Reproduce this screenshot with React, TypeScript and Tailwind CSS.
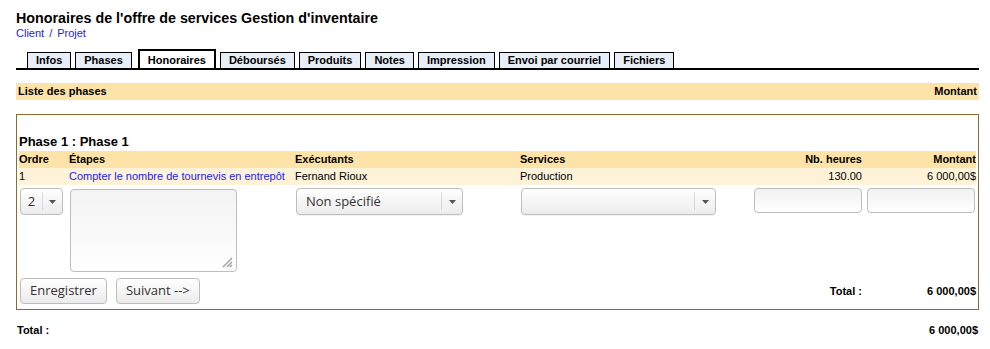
import React from "react";

const tabs = [
  "Infos",
  "Phases",
  "Honoraires",
  "Déboursés",
  "Produits",
  "Notes",
  "Impression",
  "Envoi par courriel",
  "Fichiers",
];

function Arrow() {
  return (
    <svg width="7" height="4" viewBox="0 0 7 4" className="fill-[#555]">
      <path d="M0 0h7L3.5 4z" />
    </svg>
  );
}

function Select({value, width}: {value: string; width: string}) {
  return (
    <div
      className={`${width} h-[27px] flex items-center rounded-[4px] border border-[#bdbdbd] bg-gradient-to-b from-white to-[#ececec] shadow-[0_1px_0_rgba(0,0,0,0.05)]`}
    >
      <span className="flex-1 pl-[9px] text-[13px] text-[#333] truncate">{value}</span>
      <span className="h-[17px] w-px bg-[#d8d8d8]" />
      <span className="w-[20px] flex justify-center">
        <Arrow/>
      </span>
    </div>
  );
}

function Button({label}: {label: string}) {
  return (
    <button
      className="h-[26px] px-[9px] rounded-[4px] border border-[#bdbdbd] bg-gradient-to-b from-white to-[#ebebeb] text-[13px] text-[#333]"
    >
      {label}
    </button>
  );
}

export default function App() {
  return (
    <div className="pl-4 pr-[11px] pt-[10px] font-['Liberation_Sans',Arial,sans-serif] text-black bg-white min-h-[349px]">
      <h1 className="text-[14.3px] leading-[17px] font-bold">
        Honoraires de l'offre de services Gestion d'inventaire
      </h1>
      <div className="text-[11px] leading-[12px] text-[#2222ee]">
        <a href="#">Client</a>
        <span className="px-[5px]">/</span>
        <a href="#">Projet</a>
      </div>

      <ul className="mt-[10px] flex items-end gap-[4px] pl-[11px] border-b-2 border-black">
        {tabs.map((t) =>
          t === "Honoraires" ? (
            <li
              key={t}
              className="h-[16px] ml-[2px] px-[8px] border-2 border-b-0 border-black bg-white text-[11px] font-bold leading-[17px] pt-[1px] box-content"
            >
              {t}
            </li>
          ) : (
            <li
              key={t}
              className="h-[16px] px-[8px] border border-b-0 border-black bg-[#e8eef8] text-[11px] font-bold leading-[15px]"
            >
              {t}
            </li>
          )
        )}
      </ul>

      <div className="mt-[13px] h-[17px] flex items-center justify-between bg-[#fde3a8] px-[2px] text-[11px] font-bold">
        <span>Liste des phases</span>
        <span>Montant</span>
      </div>

      <div className="mt-[14px] border border-[#8d6b2d] px-[2px] pt-[19px] pb-[5px]">
        <h2 className="text-[13px] leading-[15px] font-bold">Phase 1 : Phase 1</h2>
        <div className="mt-[2px] grid grid-cols-[50px_226px_225px_230px_114px_112px] text-[11px]">
          <div className="contents font-bold">
            <div className="h-[17px] flex items-center bg-[#fde3a8]">Ordre</div>
            <div className="h-[17px] flex items-center bg-[#fde3a8]">Étapes</div>
            <div className="h-[17px] flex items-center bg-[#fde3a8]">Exécutants</div>
            <div className="h-[17px] flex items-center bg-[#fde3a8]">Services</div>
            <div className="h-[17px] flex items-center justify-end pr-[2px] bg-[#fde3a8]">Nb. heures</div>
            <div className="h-[17px] flex items-center justify-end bg-[#fde3a8]">Montant</div>
          </div>
          <div className="contents">
            <div className="h-[17px] flex items-center bg-[#fef2d8]">1</div>
            <div className="h-[17px] flex items-center bg-[#fef2d8] text-[#2222ee]">
              Compter le nombre de tournevis en entrepôt
            </div>
            <div className="h-[17px] flex items-center bg-[#fef2d8]">Fernand Rioux</div>
            <div className="h-[17px] flex items-center bg-[#fef2d8]">Production</div>
            <div className="h-[17px] flex items-center justify-end pr-[2px] bg-[#fef2d8]">130.00</div>
            <div className="h-[17px] flex items-center justify-end bg-[#fef2d8]">6 000,00$</div>
          </div>

          <div className="contents font-['Open_Sans',sans-serif]">
            <div className="pt-[3px] pl-[1px]">
              <div className="w-[43px] h-[27px] flex items-center rounded-[4px] border border-[#bdbdbd] bg-gradient-to-b from-white to-[#ececec]">
                <span className="w-[21px] text-center text-[13px] text-[#333]">2</span>
                <span className="h-[17px] w-px bg-[#d8d8d8]" />
                <span className="flex-1 flex justify-center">
                  <Arrow/>
                </span>
              </div>
            </div>
            <div className="pt-[4px] pl-[1px]">
              <div className="relative w-[167px] h-[83px] rounded-[4px] border border-[#bdbdbd] bg-gradient-to-b from-[#f3f3f3] to-white">
                <svg
                  width="12"
                  height="12"
                  viewBox="0 0 12 12"
                  className="absolute right-[3px] bottom-[3px] stroke-[#999]"
                >
                  <path d="M11 2L2 11M11 6L6 11M11 9L9 11" strokeWidth="1.2"/>
                </svg>
              </div>
            </div>
            <div className="pt-[3px] pl-[1px]">
              <Select value="Non spécifié" width="w-[167px]"/>
            </div>
            <div className="pt-[3px] pl-[1px]">
              <Select value="" width="w-[195px]"/>
            </div>
            <div className="pt-[3px] pl-[4px]">
              <div className="w-[108px] h-[25px] rounded-[4px] border border-[#bdbdbd] bg-gradient-to-b from-[#f1f1f1] to-white"/>
            </div>
            <div className="pt-[3px] pl-[3px]">
              <div className="w-[108px] h-[25px] rounded-[4px] border border-[#bdbdbd] bg-gradient-to-b from-[#f1f1f1] to-white"/>
            </div>
          </div>
        </div>

        <div className="mt-[6px] grid grid-cols-[731px_114px_112px] items-center text-[11px]">
          <div className="flex gap-[9px] pl-[1px] font-['Open_Sans',sans-serif]">
            <Button label="Enregistrer"/>
            <Button label="Suivant -->"/>
          </div>
          <div className="text-right pr-[2px] font-bold">Total :</div>
          <div className="text-right font-bold">6 000,00$</div>
        </div>
      </div>

      <div className="mt-[12px] flex justify-between px-[1px] text-[11px] font-bold">
        <span>Total :</span>
        <span>6 000,00$</span>
      </div>
    </div>
  );
}
